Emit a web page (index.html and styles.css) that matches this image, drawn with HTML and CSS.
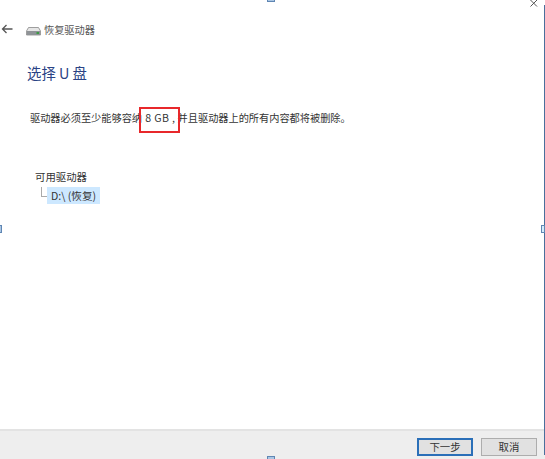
FILE: index.html
```html
<!DOCTYPE html>
<html lang="zh-CN">
<head>
<meta charset="utf-8">
<title>恢复驱动器</title>
<link rel="stylesheet" href="styles.css">
</head>
<body>
<div class="window">
  <main class="content">
    <header class="nav">
      <svg class="back" width="12" height="10" viewBox="0 0 12 10"><path d="M5.5 1 1.5 5l4 4M1.5 5H11.5" fill="none" stroke="#555" stroke-width="1.3"/></svg>
      <svg class="drive" width="15" height="10" viewBox="0 0 15 10"><path d="M2.5 1.5h10L14.5 5v4h-14V5z" fill="#e6e6e6" stroke="#888" stroke-width=".8"/><rect x="1" y="5" width="13" height="4" fill="#8f9397"/><rect x="10.5" y="6" width="2.5" height="2" fill="#3d9a46"/></svg>
      <span class="nav-title">恢复驱动器</span>
    </header>
    <h1 class="heading">选择 U 盘</h1>
    <p class="message">驱动器必须至少能够容纳 <span class="mark">8 GB ,</span> 并且驱动器上的所有内容都将被删除。</p>
    <section class="drives">
      <div class="drives-label">可用驱动器</div>
      <div class="tree-row">
        <span class="elbow"></span>
        <span class="drive-item">D:\ (恢复)</span>
      </div>
    </section>
  </main>
  <footer class="footer">
    <button class="btn btn-primary">下一步</button>
    <button class="btn">取消</button>
  </footer>
  <svg class="close" width="12" height="8" viewBox="0 0 12 8"><path d="M1.5 0 8 6.5M8 0 1.5 6.5" stroke="#555" stroke-width="1" fill="none"/></svg>
  <i class="handle h-top"></i>
  <i class="handle h-bottom"></i>
  <i class="handle h-left"></i>
  <i class="handle h-right"></i>
</div>
</body>
</html>
```
FILE: styles.css
```css
*, *::before, *::after { box-sizing: border-box; }
html, body { margin: 0; padding: 0; background: #fff; }
body { font-family: "Noto Sans CJK SC", "Noto Sans", sans-serif; color: #2b2b2b; }
.window {
  position: relative;
  width: 545px;
  height: 459px;
  display: flex;
  flex-direction: column;
  overflow: hidden;
  background: #fff;
}
.window::after {
  content: "";
  position: absolute;
  right: 0;
  top: 5px;
  bottom: 4px;
  width: 1px;
  background: #4a6f9c;
}
.content { flex: 1; padding: 22px 0 0 0; }
.nav { display: flex; align-items: center; height: 14px; padding-left: 1px; }
.back { margin-right: 13px; }
.drive { margin-right: 3px; margin-top: 4px; }
.nav-title { font-size: 10.2px; line-height: 14px; margin-top: 1px; color: #555; }
.heading {
  margin: 26px 0 0 27px;
  font-size: 14.4px;
  line-height: 22px;
  font-weight: 400;
  color: #2a4385;
}
.message {
  margin: 27px 0 0 30px;
  font-size: 10.2px;
  line-height: 14px;
  color: #333;
  white-space: nowrap;
}
.mark {
  display: inline-block;
  position: relative;
  margin-left: 1px;
  font-size: 10.6px;
  letter-spacing: .35px;
}
.mark::before {
  content: "";
  position: absolute;
  left: -6px;
  top: -4px;
  width: 41px;
  height: 26px;
  border: 2px solid #e8282b;
}
.drives { margin: 45px 0 0 35px; }
.drives-label { font-size: 10.4px; line-height: 14px; color: #333; }
.tree-row { display: flex; align-items: flex-start; margin-top: 3px; margin-left: 6px; }
.elbow {
  width: 6px;
  height: 10px;
  border-left: 1px solid #aaa;
  border-bottom: 1px solid #aaa;
}
.drive-item {
  background: #cde8ff;
  width: 53px;
  height: 17px;
  padding-left: 4px;
  font-size: 10.6px;
  line-height: 17px;
  color: #333;
}
.footer {
  height: 30px;
  border-top: 2px solid #e3e3e3;
  background: #eeeeee;
  display: flex;
  justify-content: flex-end;
  align-items: flex-start;
  gap: 8px;
  padding: 7px 8px 0 0;
}
.btn {
  width: 56px;
  height: 18px;
  padding: 0;
  border: 1px solid #adadad;
  background: #e1e1e1;
  font: 10.4px/14px "Noto Sans CJK SC", sans-serif;
  color: #333;
}
.btn-primary { border: 2px solid #2a6fb8; }
.close { position: absolute; left: 529px; top: 0; }
.handle {
  position: absolute;
  display: block;
  background: #a9c6e4;
  border: 1px solid #5f86b3;
}
.h-top { left: 267px; top: -1px; width: 8px; height: 3px; }
.h-bottom { left: 267px; bottom: -1px; width: 8px; height: 4px; }
.h-left { left: -1px; top: 225px; width: 3px; height: 8px; }
.h-right { right: 0; top: 225px; width: 4px; height: 8px; background: #d4ecfb; z-index: 1; }
```
